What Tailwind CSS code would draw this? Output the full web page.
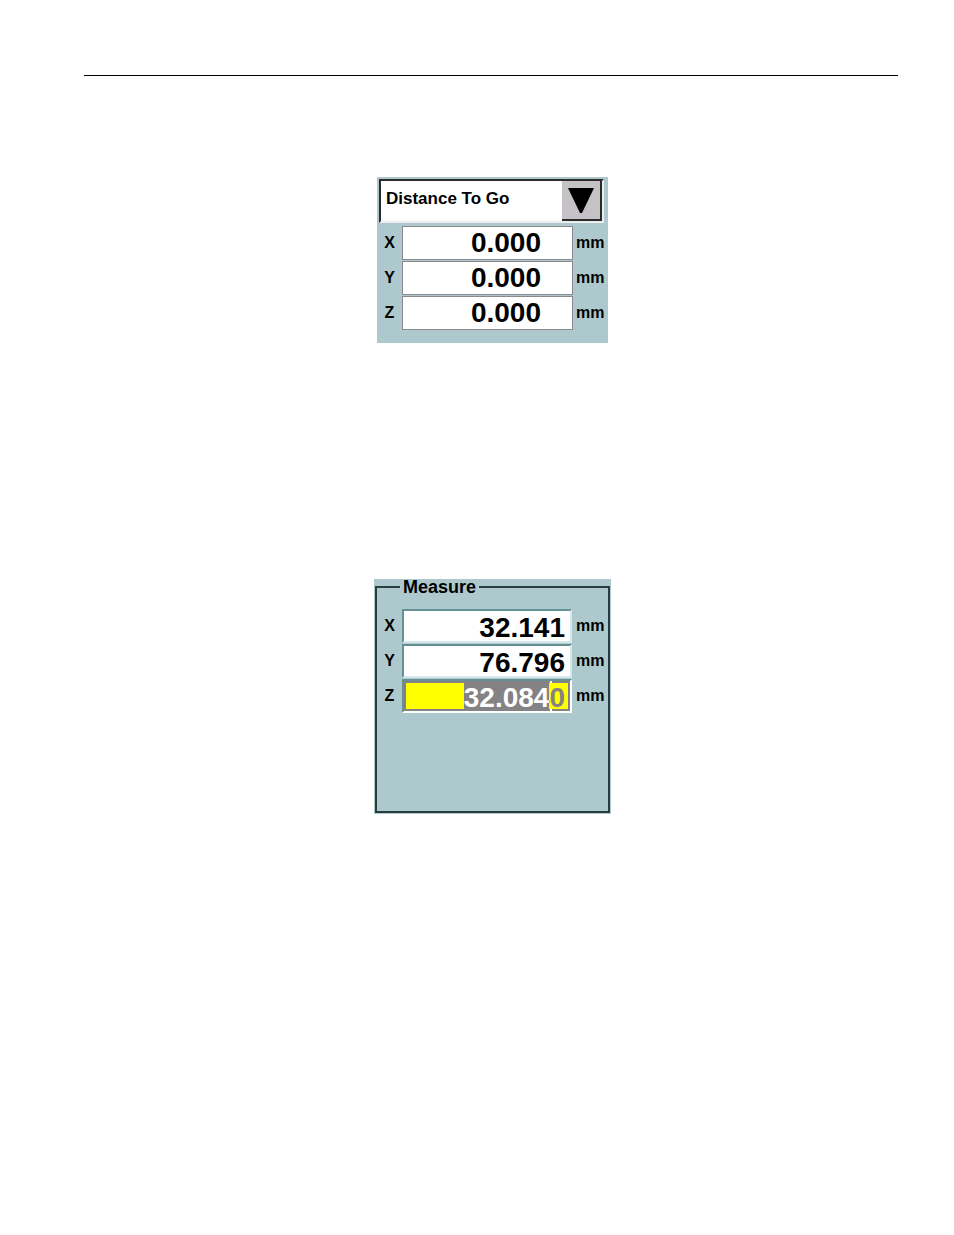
<!DOCTYPE html>
<html lang="en">
  <head>
    <meta charset="UTF-8" />
    <meta name="viewport" content="width=device-width, initial-scale=1.0" />
    <title>Distance To Go / Measure</title>
    <script src="https://cdn.jsdelivr.net/npm/@tailwindcss/browser@4"></script>
  </head>
  <body class="bg-white font-['Liberation_Sans',Arial,sans-serif] font-bold text-black">
    <header class="pt-[75px] pl-[84px] pr-[56px]">
      <hr class="border-black" />
    </header>

    <main class="flex flex-col items-center pt-[101px] pl-[87px] pr-[56px]">
      <!-- Distance To Go -->
      <section class="w-[231px] bg-[#adc9cd] pt-[2px] pb-[13px]">
        <div class="relative ml-[2px] mr-[4px]">
          <select
            aria-label="Readout"
            class="block h-[44px] w-full appearance-none border-2 border-t-[#2b2b2b] border-l-[#2b2b2b] border-r-[#ececec] border-b-[#ececec] bg-white pl-[5px] pb-[5px] text-[17px] outline-none"
          >
            <option>Distance To Go</option>
          </select>
          <span
            class="pointer-events-none absolute top-[2px] right-[2px] flex h-[40px] w-[40px] items-center justify-center border-r-2 border-b-2 border-[#2b2b2b] bg-[#c5c2c5]"
          >
            <svg class="h-[25px] w-[26px]" viewBox="0 0 26 25" aria-hidden="true">
              <path d="M0 0h26L14 25h-2z" fill="#000" />
            </svg>
          </span>
        </div>

        <div class="mt-[3px] flex flex-col gap-px">
          <div class="flex h-[34px] items-center">
            <label for="go-x" class="w-[25px] text-center text-[16px]">X</label>
            <input id="go-x" type="text" value="0.000" class="h-full w-[171px] border border-[#8c898c] bg-white pr-[31px] text-right text-[28px] outline-none" />
            <span class="pl-[3px] text-[16px]">mm</span>
          </div>
          <div class="flex h-[34px] items-center">
            <label for="go-y" class="w-[25px] text-center text-[16px]">Y</label>
            <input id="go-y" type="text" value="0.000" class="h-full w-[171px] border border-[#8c898c] bg-white pr-[31px] text-right text-[28px] outline-none" />
            <span class="pl-[3px] text-[16px]">mm</span>
          </div>
          <div class="flex h-[34px] items-center">
            <label for="go-z" class="w-[25px] text-center text-[16px]">Z</label>
            <input id="go-z" type="text" value="0.000" class="h-full w-[171px] border border-[#8c898c] bg-white pr-[31px] text-right text-[28px] outline-none" />
            <span class="pl-[3px] text-[16px]">mm</span>
          </div>
        </div>
      </section>

      <!-- Measure -->
      <section class="mt-[236px] w-[237px] bg-[#adc9cd] px-px pb-px">
        <fieldset class="border-2 border-[#2b3c3e] pb-[98px]">
          <legend class="ml-[23px] px-[3px] text-[18px] leading-4">Measure</legend>
          <div class="flex flex-col gap-px pt-[14px]">
            <div class="flex h-[34px] items-center">
              <label for="measure-x" class="w-[25px] text-center text-[16px]">X</label>
              <input id="measure-x" type="text" value="32.141" class="h-full w-[170px] border-2 border-t-[#639194] border-l-[#639194] border-r-[#d6e8ea] border-b-[#d6e8ea] bg-white pt-[4px] pr-[5px] text-right text-[28px] outline-none" />
              <span class="pl-[4px] text-[16px]">mm</span>
            </div>
            <div class="flex h-[34px] items-center">
              <label for="measure-y" class="w-[25px] text-center text-[16px]">Y</label>
              <input id="measure-y" type="text" value="76.796" class="h-full w-[170px] border-2 border-t-[#639194] border-l-[#639194] border-r-[#d6e8ea] border-b-[#d6e8ea] bg-white pt-[4px] pr-[5px] text-right text-[28px] outline-none" />
              <span class="pl-[4px] text-[16px]">mm</span>
            </div>
            <div class="flex h-[34px] items-center">
              <label for="measure-z" class="w-[25px] text-center text-[16px]">Z</label>
              <div class="relative h-full w-[170px] border-2 border-t-[#639194] border-l-[#639194] border-r-white border-b-white">
                <input id="measure-z" type="text" value="32.0840" class="block h-full w-full border-2 border-[#848284] bg-[#ffff00] pt-[4px] pr-[3px] text-right text-[28px] leading-[40px] text-[#848284] outline-none selection:bg-[#848284] selection:text-white" />
                <!-- cursor ends -->
                <span class="pointer-events-none absolute inset-y-0 right-[18px] w-[2px] border-y-2 border-white"></span>
              </div>
              <span class="pl-[4px] text-[16px]">mm</span>
            </div>
          </div>
        </fieldset>
      </section>
    </main>

    <script>
      // the last digit stays outside the selection
      const z = document.getElementById("measure-z");
      z.focus();
      z.setSelectionRange(0, 6);
    </script>
  </body>
</html>
